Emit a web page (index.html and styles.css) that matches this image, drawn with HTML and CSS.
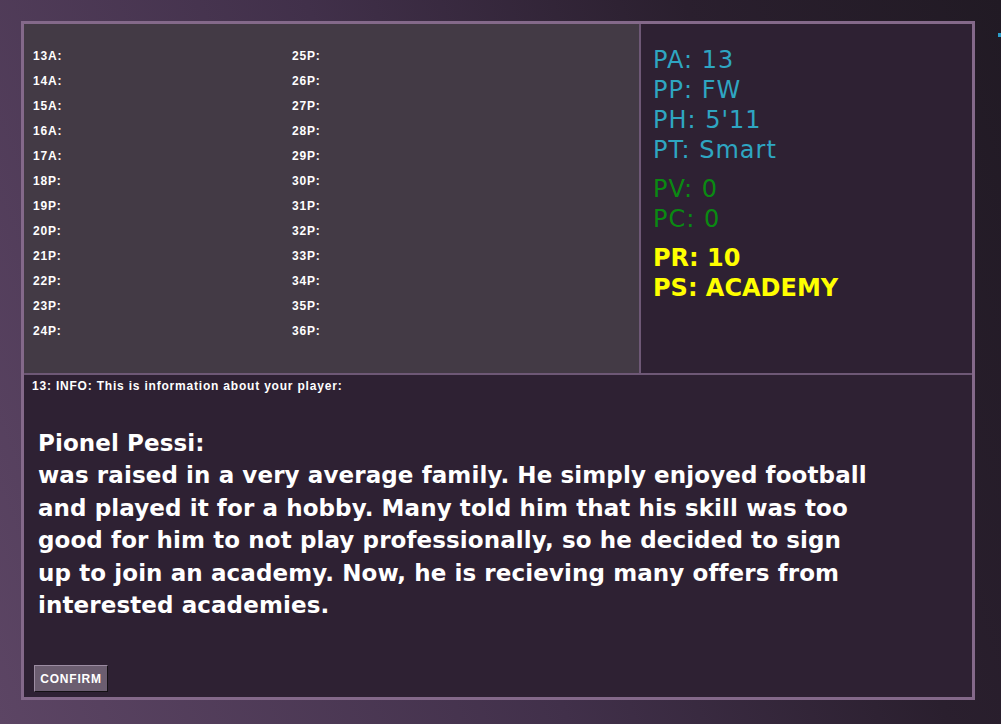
FILE: index.html
```html
<!DOCTYPE html>
<html lang="en">
<head>
    <meta charset="UTF-8">
    <title>Player Info</title>
    <link rel="stylesheet" href="styles.css">
</head>
<body>

    <span class="edge-mark"></span>

    <!-- Main frame -->
    <div class="frame">

        <!-- Slot list -->
        <div class="panel slots">
            <div>13A:</div>
            <div>14A:</div>
            <div>15A:</div>
            <div>16A:</div>
            <div>17A:</div>
            <div>18P:</div>
            <div>19P:</div>
            <div>20P:</div>
            <div>21P:</div>
            <div>22P:</div>
            <div>23P:</div>
            <div>24P:</div>
            <div>25P:</div>
            <div>26P:</div>
            <div>27P:</div>
            <div>28P:</div>
            <div>29P:</div>
            <div>30P:</div>
            <div>31P:</div>
            <div>32P:</div>
            <div>33P:</div>
            <div>34P:</div>
            <div>35P:</div>
            <div>36P:</div>
        </div>

        <!-- Player stats -->
        <div class="panel stats">
            <div class="group cyan">
                <div>PA: 13</div>
                <div>PP: FW</div>
                <div>PH: 5'11</div>
                <div>PT: Smart</div>
            </div>
            <div class="group green">
                <div>PV: 0</div>
                <div>PC: 0</div>
            </div>
            <div class="group yellow">
                <div>PR: 10</div>
                <div>PS: ACADEMY</div>
            </div>
        </div>

        <!-- Info text -->
        <div class="panel info">
            <div class="info-title">13: INFO: This is information about your player:</div>
            <div class="bio">
                Pionel Pessi:<br>
                was raised in a very average family. He simply enjoyed football<br>
                and played it for a hobby. Many told him that his skill was too<br>
                good for him to not play professionally, so he decided to sign<br>
                up to join an academy. Now, he is recieving many offers from<br>
                interested academies.
            </div>
            <button class="confirm">CONFIRM</button>
        </div>

    </div>

</body>
</html>
```

FILE: styles.css
```css
body {
    margin: 0;
    padding: 21px;
    height: 724px;
    box-sizing: border-box;
    font-family: "Liberation Sans", Arial, sans-serif;
    color: #fff;
    background: linear-gradient(70deg, #5c4564 0%, #41304a 45%, #2a1f2e 75%, #211a24 100%);
    overflow: hidden;
}

/* Small mark at the right edge */
.edge-mark {
    position: absolute;
    left: 998px;
    top: 33px;
    width: 3px;
    height: 4px;
    background: #2a9cc8;
}

/* Main frame */
.frame {
    width: 954px;
    height: 679px;
    box-sizing: border-box;
    border: 3px solid #84698a;
    box-shadow: inset 0 0 0 1px #6c5472;
    display: grid;
    grid-template-columns: 615px 331px;
    grid-template-rows: 349px 322px;
    gap: 2px;
    background-color: #6e5876;
}

.panel {
    background-color: #2e2133;
}

/* Slot list */
.slots {
    background-color: #433a45;
    padding: 20px 0 0 9px;
    display: grid;
    grid-template-columns: 259px 259px;
    grid-template-rows: repeat(12, 25px);
    grid-auto-flow: column;
    font-size: 12px;
    font-weight: bold;
    letter-spacing: 0.8px;
    line-height: 25px;
}

/* Player stats */
.stats {
    padding: 21px 0 0 12px;
    font-family: "DejaVu Sans", sans-serif;
    font-size: 24px;
    letter-spacing: 1px;
    line-height: 30px;
}

.group {
    margin-bottom: 9px;
}

.cyan {
    color: #2ea6c2;
}

.green {
    color: #0a8a12;
}

.yellow {
    color: #ffff00;
    font-weight: bold;
    letter-spacing: 0;
    margin-top: 6px;
}

/* Info text */
.info {
    grid-column: 1 / 3;
    display: flex;
    flex-direction: column;
    align-items: flex-start;
    padding: 1px 0 5px 8px;
}

.info-title {
    font-size: 12px;
    font-weight: bold;
    letter-spacing: 0.8px;
    line-height: 20px;
}

.bio {
    margin-top: 31px;
    padding-left: 6px;
    font-family: "DejaVu Sans", sans-serif;
    font-size: 23px;
    font-weight: bold;
    letter-spacing: 0.1px;
    line-height: 32.4px;
}

.confirm {
    margin: auto 0 0 2px;
    width: 74px;
    height: 27px;
    padding: 0;
    background-color: #6b5d70;
    color: #fff;
    font-family: "Liberation Sans", Arial, sans-serif;
    font-size: 12px;
    font-weight: bold;
    letter-spacing: 0.8px;
    border: 1px solid;
    border-color: #9c8ca2 #141014 #141014 #9c8ca2;
}
```
